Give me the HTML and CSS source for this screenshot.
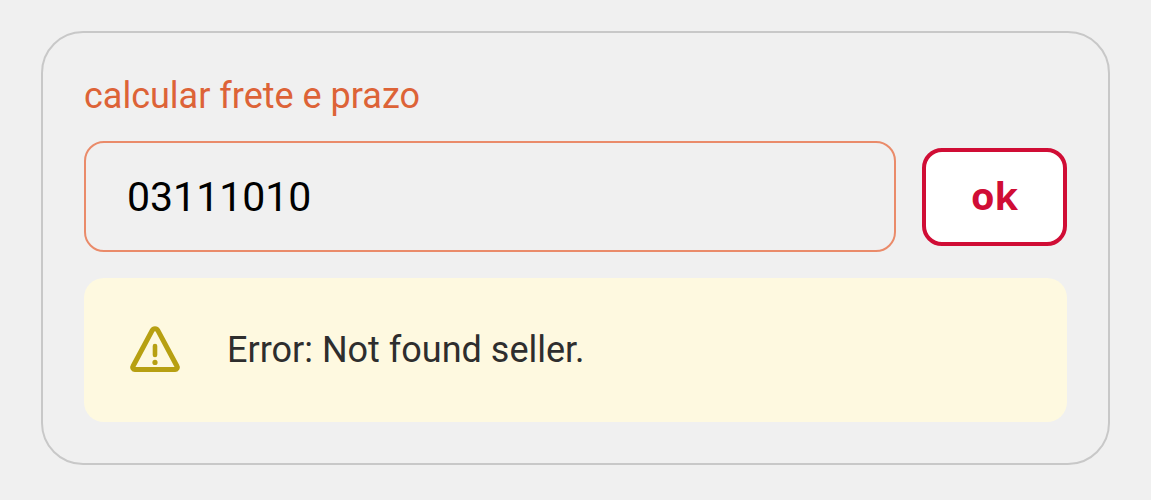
FILE: index.html
```
<!DOCTYPE html>
<html lang="pt-BR">
<head>
    <meta charset="UTF-8">
    <meta name="viewport" content="width=device-width, initial-scale=1">
    <title>Frete e prazo</title>
    <link rel="stylesheet" href="styles.css">
</head>
<body>
    <section class="shipping">
        <form class="shipping-form">
            <label class="shipping-label" for="cep">calcular frete e prazo</label>
            <div class="shipping-row">
                <input class="shipping-input" id="cep" type="text" inputmode="numeric" maxlength="8" value="03111010">
                <button class="shipping-btn" type="submit">ok</button>
            </div>
        </form>
        <div class="alert" role="alert">
            <svg class="alert-icon" viewBox="0 0 50 48" aria-hidden="true">
                <path d="M22.2 4.4a3.2 3.2 0 0 1 5.6 0l19.2 35.8a2.2 2.2 0 0 1-2 3.3H5a2.2 2.2 0 0 1-2-3.3z" fill="none" stroke="currentColor" stroke-width="5" stroke-linejoin="round"/>
                <path d="M25 20v9" fill="none" stroke="currentColor" stroke-width="4.6" stroke-linecap="round"/>
                <circle cx="25" cy="36.4" r="2.6" fill="currentColor"/>
            </svg>
            <p class="alert-text">Error: Not found seller.</p>
        </div>
    </section>
</body>
</html>
```
FILE: styles.css
```
*{padding: 0;margin: 0;box-sizing: border-box;}
body{
    background: #f0f0f0;
    font-family: Roboto, "Liberation Sans", sans-serif;
}
.shipping{
    margin: 31px 41px;
    padding: 42px 41px 41px;
    border: 2px solid #c8c8c8;
    border-radius: 42px;
}
.shipping-label{
    display: block;
    margin-bottom: 24px;
    font-size: 36px;
    line-height: 42px;
    color: #dd6337;
}
.shipping-row{
    display: flex;
    align-items: center;
    gap: 26px;
}
.shipping-input{
    flex: 1;
    min-width: 0;
    height: 111px;
    padding: 0 41px;
    border: 2px solid #ea8b6a;
    border-radius: 20px;
    background: #f0f0f0;
    font-family: inherit;
    font-size: 41px;
    color: #000;
}
.shipping-btn{
    width: 145px;
    padding: 19px 0 23px;
    border: 4px solid #d00d35;
    border-radius: 20px;
    background: #fff;
    font-family: "Open Sans", sans-serif;
    font-size: 38px;
    font-weight: 700;
    line-height: 48px;
    color: #d00d35;
}
.alert{
    display: flex;
    align-items: center;
    gap: 47px;
    margin-top: 26px;
    padding: 48px 46px;
    border-radius: 20px;
    background: #fef9e0;
    color: #b7a012;
}
.alert-icon{
    flex: none;
    width: 50px;
    height: 48px;
}
.alert-text{
    font-size: 36px;
    line-height: 42px;
    color: #2e2e2e;
}
```
